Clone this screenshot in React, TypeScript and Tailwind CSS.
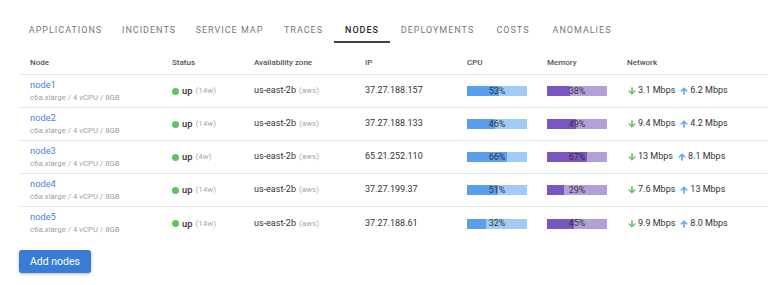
import React from "react";

const tabs: { label: string; w: string; active?: boolean }[] = [
  { label: "APPLICATIONS", w: "w-[93px]" },
  { label: "INCIDENTS", w: "w-[74px]" },
  { label: "SERVICE MAP", w: "w-[87px]" },
  { label: "TRACES", w: "w-[61px]" },
  { label: "NODES", w: "w-[56px]", active: true },
  { label: "DEPLOYMENTS", w: "w-[95px]" },
  { label: "COSTS", w: "w-[56px]" },
  { label: "ANOMALIES", w: "w-[82px]" },
];

const rows = [
  { name: "node1", up: "14w", ip: "37.27.188.157", cpu: 53, mem: 38, down: "3.1 Mbps", upN: "6.2 Mbps" },
  { name: "node2", up: "14w", ip: "37.27.188.133", cpu: 46, mem: 49, down: "9.4 Mbps", upN: "4.2 Mbps" },
  { name: "node3", up: "4w", ip: "65.21.252.110", cpu: 66, mem: 67, down: "13 Mbps", upN: "8.1 Mbps" },
  { name: "node4", up: "14w", ip: "37.27.199.37", cpu: 51, mem: 29, down: "7.6 Mbps", upN: "13 Mbps" },
  { name: "node5", up: "14w", ip: "37.27.188.61", cpu: 32, mem: 45, down: "9.9 Mbps", upN: "8.0 Mbps" },
];

const grid = "grid grid-cols-[142px_82px_111px_102px_80px_80px_1fr]";

function Bar({ value, fill, bg }: { value: number; fill: string; bg: string }) {
  return (
    <div className={`relative h-[10px] w-[60px] ${bg}`}>
      <div className={`h-full ${fill}`} style={{ width: `${value}%` }} />
      <div className="absolute inset-0 flex items-center justify-center text-[9px] leading-none text-[#2c3440]">
        {value}%
      </div>
    </div>
  );
}

function ArrowDown() {
  return (
    <svg viewBox="0 0 24 24" className="h-[10px] w-[10px]" fill="#5fb760" stroke="#5fb760" strokeWidth="1.5">
      <path d="M20 12l-1.41-1.41L13 16.17V4h-2v12.17l-5.58-5.59L4 12l8 8 8-8z" />
    </svg>
  );
}

function ArrowUp() {
  return (
    <svg viewBox="0 0 24 24" className="h-[10px] w-[10px]" fill="#4a9ef0" stroke="#4a9ef0" strokeWidth="1.5">
      <path d="M4 12l1.41 1.41L11 7.83V20h2V7.83l5.58 5.59L20 12l-8-8-8 8z" />
    </svg>
  );
}

export default function App() {
  return (
    <div
      className="min-h-[285px] bg-white pl-[19px] pt-[18px]"
      style={{ fontFamily: "Roboto, 'Liberation Sans', sans-serif" }}
    >
      <div className="flex">
        {tabs.map((t) => (
          <div
            key={t.label}
            className={`${t.w} flex h-[25px] items-center justify-center pt-[2px] text-[9px] tracking-[0.11em] ${
              t.active
                ? "border-b-2 border-[#424242] font-medium text-[#2a2a2a]"
                : "border-b-2 border-transparent text-[#777]"
            }`}
          >
            {t.label}
          </div>
        ))}
      </div>

      <div className="mt-[9px]">
        <div className={`${grid} h-[23px] items-center border-b border-[#e6e6e6] text-[8px] font-medium text-[#555]`}>
          <div className="pl-[11px]">Node</div>
          <div className="pl-[11px]">Status</div>
          <div className="pl-[11px]">Availability zone</div>
          <div className="pl-[11px]">IP</div>
          <div className="pl-[11px]">CPU</div>
          <div className="pl-[11px]">Memory</div>
          <div className="pl-[11px]">Network</div>
        </div>
        {rows.map((r, i) => (
          <div
            key={r.name}
            className={`${grid} h-[33px] items-center text-[9px] text-[#333] ${
              i < rows.length - 1 ? "border-b border-[#e6e6e6]" : ""
            }`}
          >
            <div className="flex flex-col pl-[11px]">
              <span className="text-[9.3px] leading-[12px] text-[#4a82db]">{r.name}</span>
              <span className="text-[7.8px] leading-[13px] text-[#a0a0a0]">c6a.xlarge / 4 vCPU / 8GB</span>
            </div>
            <div className="flex items-center pl-[11px]">
              <span className="mr-[3px] inline-block h-[7px] w-[7px] rounded-full bg-[#5cc65c]" />
              <span className="text-[9.3px] font-medium text-[#333]">up</span>
              <span className="ml-[3px] text-[8px] text-[#a8a8a8]">({r.up})</span>
            </div>
            <div className="flex items-center pl-[11px]">
              <span>us-east-2b</span>
              <span className="ml-[3px] text-[8px] text-[#a8a8a8]">(aws)</span>
            </div>
            <div className="pl-[11px]">{r.ip}</div>
            <div className="pl-[11px]">
              <Bar value={r.cpu} fill="bg-[#5a9fec]" bg="bg-[#a0cbf5]" />
            </div>
            <div className="pl-[11px]">
              <Bar value={r.mem} fill="bg-[#7b56c0]" bg="bg-[#b3a0da]" />
            </div>
            <div className="flex items-center pl-[11px]">
              <ArrowDown />
              <span className="ml-[1px]">{r.down}</span>
              <span className="ml-[4px]"><ArrowUp /></span>
              <span className="ml-[1px]">{r.upN}</span>
            </div>
          </div>
        ))}
      </div>

      <button className="mt-[10px] h-[23px] w-[72px] rounded-[3px] bg-[#3a7bd6] text-[10.5px] text-white shadow-[0_1px_3px_rgba(0,0,0,0.3)]">
        Add nodes
      </button>
    </div>
  );
}
